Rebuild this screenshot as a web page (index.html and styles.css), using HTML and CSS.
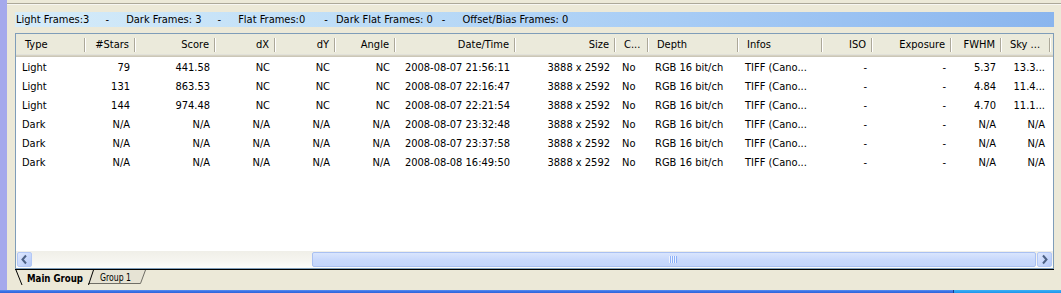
FILE: index.html
```html
<!DOCTYPE html>
<html>
<head>
<meta charset="utf-8">
<link rel="stylesheet" href="styles.css">
</head>
<body>
<div class="app">
  <div class="upper">
    <div class="strip"></div>
    <div class="main">
      <div class="topline"></div>
      <div class="bar">
        <span>Light Frames:3</span><span class="dash">-</span>
        <span>Dark Frames: 3</span><span class="dash">-</span>
        <span>Flat Frames:0</span><span class="dash d3">-</span>
        <span>Dark Flat Frames: 0</span><span class="dash d4">-</span>
        <span>Offset/Bias Frames: 0</span>
      </div>
      <div class="box">
        <div class="list">
          <table class="grid">
            <colgroup>
              <col class="w70"><col class="w50"><col class="w80"><col class="w60"><col class="w60"><col class="w60">
              <col class="w120"><col class="w100"><col class="w33"><col class="w90"><col class="w84"><col class="w50">
              <col class="w79"><col class="w50"><col class="w49"><col>
            </colgroup>
            <thead>
              <tr>
                <th class="l first">Type</th><th>#Stars</th><th>Score</th><th>dX</th><th>dY</th><th>Angle</th>
                <th>Date/Time</th><th>Size</th><th class="l">C...</th><th class="l">Depth</th><th class="l">Infos</th>
                <th>ISO</th><th>Exposure</th><th>FWHM</th><th class="l">Sky ...</th><th class="fill"></th>
              </tr>
            </thead>
            <tbody>
              <tr><td class="l">Light</td><td>79</td><td>441.58</td><td>NC</td><td>NC</td><td>NC</td><td>2008-08-07 21:56:11</td><td>3888 x 2592</td><td class="l">No</td><td class="l">RGB 16 bit/ch</td><td class="l">TIFF (Cano...</td><td>-</td><td>-</td><td>5.37</td><td>13.3...</td><td></td></tr>
              <tr><td class="l">Light</td><td>131</td><td>863.53</td><td>NC</td><td>NC</td><td>NC</td><td>2008-08-07 22:16:47</td><td>3888 x 2592</td><td class="l">No</td><td class="l">RGB 16 bit/ch</td><td class="l">TIFF (Cano...</td><td>-</td><td>-</td><td>4.84</td><td>11.4...</td><td></td></tr>
              <tr><td class="l">Light</td><td>144</td><td>974.48</td><td>NC</td><td>NC</td><td>NC</td><td>2008-08-07 22:21:54</td><td>3888 x 2592</td><td class="l">No</td><td class="l">RGB 16 bit/ch</td><td class="l">TIFF (Cano...</td><td>-</td><td>-</td><td>4.70</td><td>11.1...</td><td></td></tr>
              <tr><td class="l">Dark</td><td>N/A</td><td>N/A</td><td>N/A</td><td>N/A</td><td>N/A</td><td>2008-08-07 23:32:48</td><td>3888 x 2592</td><td class="l">No</td><td class="l">RGB 16 bit/ch</td><td class="l">TIFF (Cano...</td><td>-</td><td>-</td><td>N/A</td><td>N/A</td><td></td></tr>
              <tr><td class="l">Dark</td><td>N/A</td><td>N/A</td><td>N/A</td><td>N/A</td><td>N/A</td><td>2008-08-07 23:37:58</td><td>3888 x 2592</td><td class="l">No</td><td class="l">RGB 16 bit/ch</td><td class="l">TIFF (Cano...</td><td>-</td><td>-</td><td>N/A</td><td>N/A</td><td></td></tr>
              <tr><td class="l">Dark</td><td>N/A</td><td>N/A</td><td>N/A</td><td>N/A</td><td>N/A</td><td>2008-08-08 16:49:50</td><td>3888 x 2592</td><td class="l">No</td><td class="l">RGB 16 bit/ch</td><td class="l">TIFF (Cano...</td><td>-</td><td>-</td><td>N/A</td><td>N/A</td><td></td></tr>
            </tbody>
          </table>
        </div>
        <div class="hscroll">
          <div class="sbtn"><div class="sbtn-in">
            <svg width="15" height="15" viewBox="0 0 15 15"><polyline points="9,3.5 5.5,7.5 9,11.5" fill="none" stroke="#4d6185" stroke-width="2"/></svg>
          </div></div>
          <div class="track">
            <div class="thumb">
              <svg width="8" height="7" viewBox="0 0 8 7"><g stroke="#eef3fe" stroke-width="1"><line x1="0.5" y1="0" x2="0.5" y2="7"/><line x1="2.5" y1="0" x2="2.5" y2="7"/><line x1="4.5" y1="0" x2="4.5" y2="7"/><line x1="6.5" y1="0" x2="6.5" y2="7"/></g><g stroke="#8cb0f8" stroke-width="1"><line x1="1.5" y1="0" x2="1.5" y2="7"/><line x1="3.5" y1="0" x2="3.5" y2="7"/><line x1="5.5" y1="0" x2="5.5" y2="7"/><line x1="7.5" y1="0" x2="7.5" y2="7"/></g></svg>
            </div>
          </div>
          <div class="sbtn"><div class="sbtn-in">
            <svg width="15" height="15" viewBox="0 0 15 15"><polyline points="6,3.5 9.5,7.5 6,11.5" fill="none" stroke="#4d6185" stroke-width="2"/></svg>
          </div></div>
        </div>
      </div>
      <div class="tabs">
        <svg class="tabsvg" width="150" height="16" viewBox="0 0 150 16">
          <polygon points="76,0 131,0 126,13 73,13" fill="#e6e3d4"/>
          <polyline points="73,13.5 125.5,13.5 130.5,0" fill="none" stroke="#6f6e66" stroke-width="1"/>
          <line x1="1" y1="0" x2="7" y2="15" stroke="#000" stroke-width="1"/>
          <line x1="73.5" y1="15" x2="78.5" y2="0" stroke="#000" stroke-width="1"/>
          <text x="12" y="11.5" class="tabtxt bold" textLength="56" lengthAdjust="spacingAndGlyphs">Main Group</text>
          <text x="85" y="11" class="tabtxt" textLength="31" lengthAdjust="spacingAndGlyphs">Group 1</text>
        </svg>
      </div>
    </div>
  </div>
  <div class="taskbar"><div class="tb-left"></div><div class="tb-right"></div></div>
</div>
</body>
</html>
```

FILE: styles.css
```css
html, body {
  margin: 0;
  padding: 0;
}
body {
  width: 1061px;
  height: 293px;
  overflow: hidden;
  background: #ece9d8;
  font-family: "DejaVu Sans Condensed", "Liberation Sans", Arial, sans-serif;
  font-size: 11px;
  color: #000;
}
.app {
  display: flex;
  flex-direction: column;
  height: 293px;
}
.upper {
  display: flex;
  height: 290px;
}
.strip {
  width: 7px;
  background: #a5a9ec;
  flex: none;
}
.main {
  flex: 1;
  display: flex;
  flex-direction: column;
}
.topline {
  height: 1px;
  margin-top: 3px;
  background: #aca899;
  box-shadow: 0 1px #f7f6f1;
}
.bar {
  margin: 8px 7px 0 8px;
  height: 15px;
  line-height: 15px;
  padding-left: 1px;
  background: linear-gradient(to right, #d6ecf9 0%, #bcdcf7 35%, #a6cbf5 65%, #8ab5ee 100%);
  white-space: nowrap;
}
.bar .dash {
  display: inline-block;
  padding: 0 14px 0 16px;
}
.bar .dash.d3 { padding: 0 5px 0 19px; }
.bar .dash.d4 { padding: 0 14px 0 9px; }
.box {
  margin: 6px 7px 0 8px;
  height: 236px;
  box-sizing: border-box;
  border: 1px solid #7f9db9;
  background: #fff;
  display: flex;
  flex-direction: column;
}
.list {
  flex: 1;
  overflow: hidden;
}
.grid {
  width: 100%;
  table-layout: fixed;
  border-collapse: collapse;
  border-spacing: 0;
}
.w70 { width: 70px; }
.w50 { width: 50px; }
.w80 { width: 80px; }
.w60 { width: 60px; }
.w120 { width: 120px; }
.w100 { width: 100px; }
.w33 { width: 33px; }
.w90 { width: 90px; }
.w84 { width: 84px; }
.w79 { width: 79px; }
.w49 { width: 49px; }
.grid th {
  height: 23px;
  padding: 0 7px 3px 6px;
  box-sizing: border-box;
  font-weight: normal;
  text-align: right;
  white-space: nowrap;
  overflow: hidden;
  background:
    linear-gradient(#aca899, #aca899) no-repeat right 1px top 4px / 1px 14px,
    linear-gradient(#ffffff, #ffffff) no-repeat right 0 top 4px / 1px 14px,
    #ebeadb;
  box-shadow: inset 0 -1px #cbc7b8, inset 0 -2px #d6d2c2, inset 0 -3px #e2e2da;
}
.grid th.l { text-align: left; padding-left: 8px; }
.grid th.first { padding-left: 9px; }
.grid th.fill {
  padding: 0;
  background: #ebeadb;
}
.grid td {
  height: 19px;
  padding: 0 6px;
  text-align: right;
  white-space: nowrap;
  overflow: hidden;
}
.grid td.l { text-align: left; }
.grid tbody tr:first-child td { padding-top: 1px; }
.hscroll {
  height: 17px;
  display: flex;
  background: linear-gradient(to bottom, #f0efe8 0%, #f5f4ef 50%, #fdfdfb 100%);
}
.sbtn {
  width: 17px;
  height: 17px;
  flex: none;
  box-sizing: border-box;
  padding: 1px;
}
.sbtn-in {
  height: 15px;
  box-sizing: border-box;
  border: 1px solid #b3c8f6;
  border-radius: 2px;
  background: linear-gradient(135deg, #dfe8fe 0%, #c6d6fb 60%, #b4c8f6 100%);
  display: flex;
  align-items: center;
  justify-content: center;
}
.sbtn-in svg { display: block; margin: -1px; }
.track {
  flex: 1;
  display: flex;
  padding: 1px 0;
}
.thumb {
  margin-left: 279px;
  flex: 1;
  box-sizing: border-box;
  border: 1px solid #a9c0f2;
  border-radius: 2px;
  background: linear-gradient(to bottom, #d9e5fd 0%, #c9d9fc 50%, #c3d5fb 100%);
  display: flex;
  align-items: center;
  padding-left: 356px;
}
.thumb svg { display: block; }
.tabs {
  margin: 0 7px 0 8px;
  border-top: 1px solid #000;
  height: 16px;
}
.tabsvg { display: block; }
.tabtxt {
  font-family: "DejaVu Sans Condensed", "Liberation Sans", Arial, sans-serif;
  font-size: 11px;
  fill: #000;
}
.tabtxt.bold { font-weight: bold; }
.taskbar {
  height: 3px;
  display: flex;
}
.tb-left {
  width: 953px;
  background: linear-gradient(to bottom, #5c8ff0 0%, #3a72e6 50%, #2f64d8 100%);
  border-right: 1px solid #1a3a8a;
}
.tb-right {
  flex: 1;
  background: linear-gradient(to bottom, #3fb0f5 0%, #1b95ec 100%);
}
```
